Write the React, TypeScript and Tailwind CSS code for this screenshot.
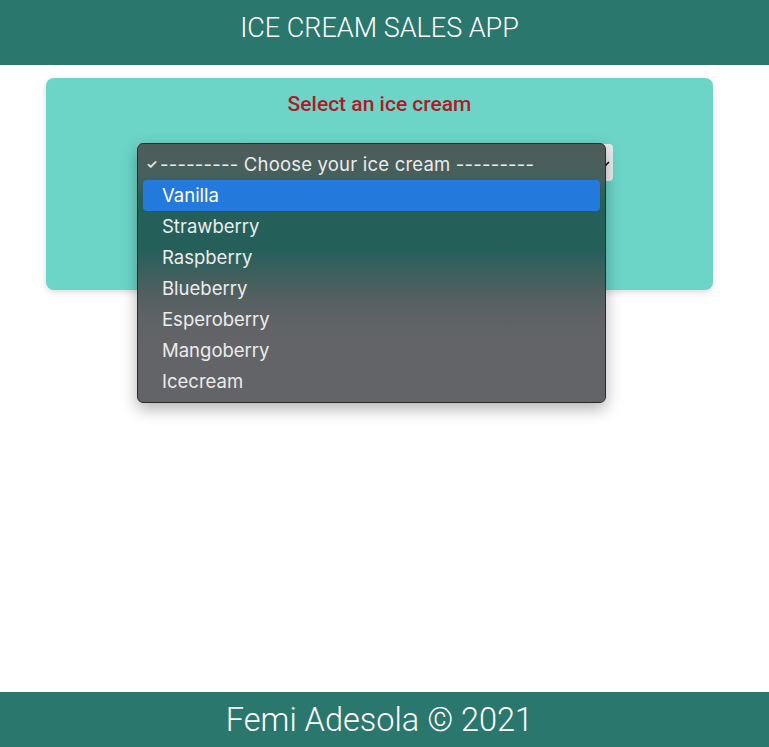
import React from 'react';

const flavours = ['Vanilla', 'Strawberry', 'Raspberry', 'Blueberry', 'Esperoberry', 'Mangoberry', 'Icecream'];

export default function App() {
  return (
    <div className="min-h-[747px] flex flex-col bg-white" style={{ fontFamily: 'Roboto, "Liberation Sans", sans-serif' }}>
      <header className="h-[65px] bg-[#2a776e] flex items-center justify-center pr-[10px]">
        <h1 className="text-white text-[27px] font-light leading-none pb-[9px]">ICE CREAM SALES APP</h1>
      </header>

      <main className="flex-1 pt-[13px]">
        <div className="ml-[46px] w-[667px] h-[212px] bg-[#6cd5c8] rounded-[8px] shadow-[0_2px_6px_rgba(0,0,0,0.15)] flex flex-col">
          <h2 className="text-center text-[#b01a28] text-[21px] font-medium pt-[14px] leading-[24px]">Select an ice cream</h2>

          <div className="relative ml-[91px] mt-[28px] w-[476px] h-[37px]">
            {/* the closed select underneath */}
            <div className="w-full h-full bg-[#ececec] rounded-[4px] flex items-center justify-end pr-[3px]">
              <svg width="8" height="8" viewBox="0 0 8 8" className="text-black">
                <path d="M1 3 L4 6 L7 3" stroke="currentColor" strokeWidth="1.5" fill="none" />
              </svg>
            </div>

            {/* open native menu */}
            <div
              className="absolute left-0 top-[-1px] w-[469px] h-[260px] rounded-[6px] border border-[#2a2a2a] shadow-[0_6px_16px_rgba(0,0,0,0.3)] z-10 px-[5px] pt-[8px]"
              style={{
                fontFamily: 'Inter, "Liberation Sans", sans-serif',
                background:
                  'linear-gradient(to bottom, #4f5b59 0px, #46605c 30px, #2a5f5a 55px, #245f5a 70px, #245f5a 105px, #3a5f5d 125px, #525f60 150px, #5f6265 175px, #636467 200px, #636467 260px)',
              }}
            >
              <div className="h-[28px] flex items-center pb-[3px] text-[#ececec] text-[18.5px] leading-none">
                <span className="w-[17px] pl-[3px] text-[13px] font-semibold">✓</span>
                <span className="tracking-[0.2px]">--------- Choose your ice cream ---------</span>
              </div>
              {flavours.map((f, i) => (
                <div
                  key={f}
                  className={
                    i === 0
                      ? 'h-[31px] flex items-center pl-[19px] rounded-[4px] bg-[#237adc] text-white text-[18.5px]'
                      : 'h-[31px] flex items-center pl-[19px] text-[#ececec] text-[18.5px]'
                  }
                >
                  {f}
                </div>
              ))}
            </div>
          </div>
        </div>
      </main>

      <footer className="h-[55px] bg-[#2a776e] flex items-center justify-center pr-[10px]">
        <p className="text-white text-[32.5px] font-light leading-none pt-[2px]">Femi Adesola © 2021</p>
      </footer>
    </div>
  );
}
